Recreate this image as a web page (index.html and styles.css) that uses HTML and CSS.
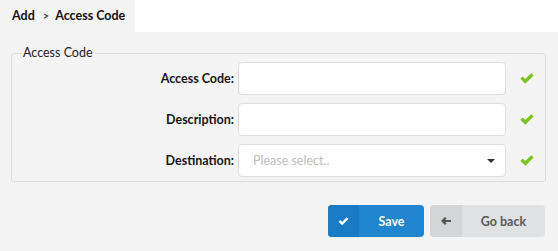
FILE: index.html
```html
<!DOCTYPE html>
<html>
<head>
<meta charset="utf-8">
<link rel="stylesheet" href="styles.css">
</head>
<body>
<div class="header">
  <div class="tab"><span>Add</span><span class="sep">&gt;</span><span>Access Code</span></div>
</div>
<div class="content">
  <fieldset class="group">
    <legend>Access Code</legend>
    <div class="row">
      <label class="label">Access Code:</label>
      <div class="input"></div>
      <svg class="ok" viewBox="0 0 16 12" width="16" height="11"><path d="M0.8 6.3 L3.4 3.8 L6.1 6.5 L12.6 0.2 L15.2 2.7 L6.1 11.6 Z" fill="#7cc41c"/></svg>
    </div>
    <div class="row">
      <label class="label">Description:</label>
      <div class="input"></div>
      <svg class="ok" viewBox="0 0 16 12" width="16" height="11"><path d="M0.8 6.3 L3.4 3.8 L6.1 6.5 L12.6 0.2 L15.2 2.7 L6.1 11.6 Z" fill="#7cc41c"/></svg>
    </div>
    <div class="row">
      <label class="label">Destination:</label>
      <div class="input select"><span class="ph">Please select..</span><span class="caret"></span></div>
      <svg class="ok" viewBox="0 0 16 12" width="16" height="11"><path d="M0.8 6.3 L3.4 3.8 L6.1 6.5 L12.6 0.2 L15.2 2.7 L6.1 11.6 Z" fill="#7cc41c"/></svg>
    </div>
  </fieldset>
  <div class="actions">
    <div class="btn primary">
      <span class="icon"><svg viewBox="0 0 12 10" width="11" height="9"><path d="M0.5 5.2 L2.4 3.3 L4.5 5.4 L9.6 0.3 L11.5 2.2 L4.5 9.2 Z" fill="#fff"/></svg></span>
      <span class="text">Save</span>
    </div>
    <div class="btn back">
      <span class="icon"><svg viewBox="0 0 10 8" width="10" height="8"><path d="M0 4 L4 0 L5.6 1.5 L4.1 3 L10 3 L10 5 L4.1 5 L5.6 6.5 L4 8 Z" fill="#555"/></svg></span>
      <span class="text">Go back</span>
    </div>
  </div>
</div>
</body>
</html>
```
FILE: styles.css
```css
html, body {
  margin: 0;
  padding: 0;
  background: #f4f4f4;
  font-family: Lato, "Open Sans", sans-serif;
  font-size: 12.5px;
  color: #222;
}
.header {
  display: flex;
  height: 32px;
  background: #fff;
}
.tab {
  width: 135px;
  padding-left: 12px;
  padding-bottom: 2px;
  box-sizing: border-box;
  background: #f4f4f4;
  display: flex;
  align-items: center;
  white-space: nowrap;
  font-weight: bold;
  color: #111;
}
.tab .sep {
  font-size: 11px;
  font-weight: normal;
  margin: 1px 6px 0 8px;
}
.content {
  padding: 13px 12px 0 11px;
}
.group {
  margin: 0;
  padding: 1px 9px 4px 9px;
  border: 1px solid #dcdcdc;
  border-radius: 3px;
  min-width: 0;
}
.group legend {
  padding: 0 2px;
  line-height: 16px;
  color: #222;
}
.row {
  display: flex;
  align-items: center;
  height: 33px;
  margin-bottom: 8px;
}
.row:last-child {
  margin-bottom: 0;
}
.label {
  width: 213px;
  text-align: right;
  font-weight: bold;
  margin-right: 4px;
  color: #161616;
}
.input {
  width: 268px;
  height: 33px;
  box-sizing: border-box;
  background: #fff;
  border: 1px solid #dedede;
  border-radius: 4px;
}
.select {
  display: flex;
  align-items: center;
  justify-content: space-between;
  padding: 0 10px 0 14px;
}
.ph {
  color: #bdbdbd;
}
.caret {
  width: 0;
  height: 0;
  border-left: 4px solid transparent;
  border-right: 4px solid transparent;
  border-top: 4px solid #333;
  margin-top: 1px;
}
.ok {
  margin-left: 13px;
}
.actions {
  display: flex;
  justify-content: flex-end;
  gap: 6px;
  margin-top: 23px;
  margin-right: 1px;
}
.btn {
  display: flex;
  height: 32px;
  border-radius: 4px;
  overflow: hidden;
  font-weight: bold;
}
.btn .icon {
  width: 31px;
  display: flex;
  align-items: center;
  justify-content: center;
}
.btn .text {
  flex: 1;
  display: flex;
  align-items: center;
  justify-content: center;
}
.primary {
  width: 96px;
  background: #2185d0;
  color: #fff;
}
.primary .icon {
  background: #1a7bc4;
}
.back {
  width: 115px;
  background: #e0e1e2;
  color: #5a5a5a;
}
.back .icon {
  width: 32px;
  background: #d4d5d6;
}
```
